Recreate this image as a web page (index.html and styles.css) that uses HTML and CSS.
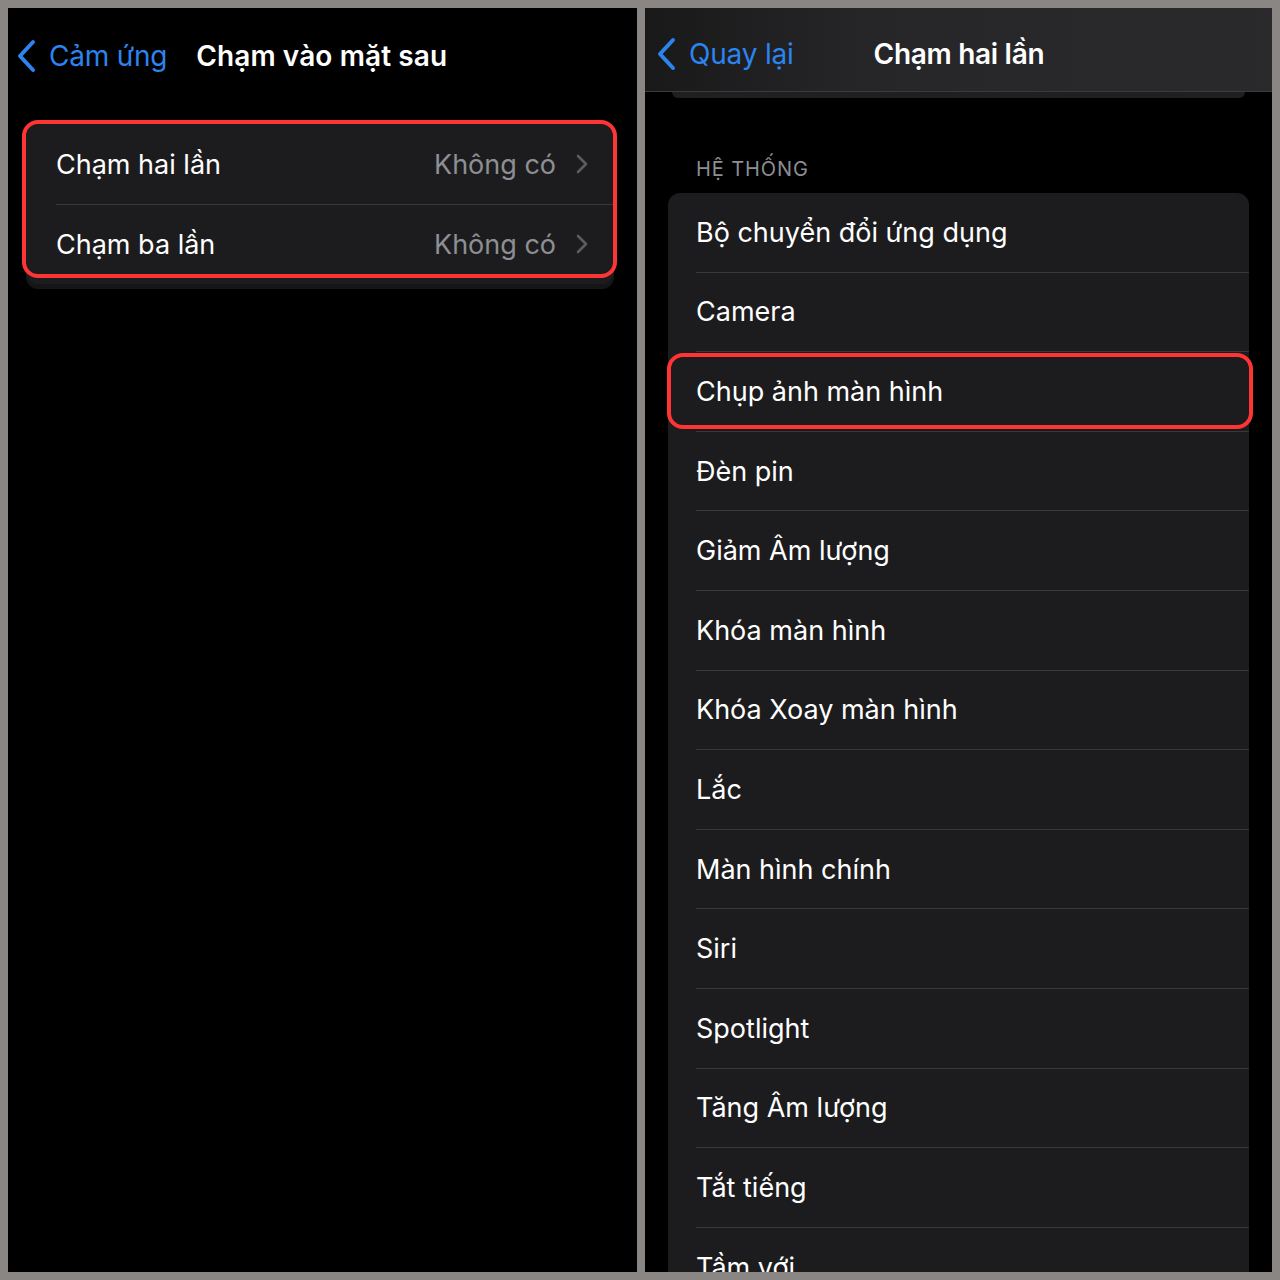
FILE: index.html
```html
<!DOCTYPE html>
<html lang="vi">
<head>
    <meta charset="UTF-8">
    <meta name="viewport" content="width=device-width, initial-scale=1.0">
    <title>Chạm vào mặt sau</title>
    <link rel="stylesheet" href="styles.css">
</head>
<body>
<div class="screen screen-left">
    <div class="nav">
        <a class="back-button" href="#">
            <svg class="back-icon" width="22" height="34" viewBox="0 0 22 34"><path d="M18 3 L5 17 L18 31" fill="none" stroke="currentColor" stroke-width="4" stroke-linecap="round" stroke-linejoin="round"/></svg>
            <span>Cảm ứng</span>
        </a>
        <h1 class="nav-title">Chạm vào mặt sau</h1>
    </div>
    <div class="group group-short">
        <div class="row">
            <span class="row-label">Chạm hai lần</span>
            <span class="row-value">Không có</span>
            <svg class="chevron" width="12" height="20" viewBox="0 0 12 20"><path d="M2 2 L10 10 L2 18" fill="none" stroke="currentColor" stroke-width="2.6" stroke-linecap="round" stroke-linejoin="round"/></svg>
        </div>
        <div class="row">
            <span class="row-label">Chạm ba lần</span>
            <span class="row-value">Không có</span>
            <svg class="chevron" width="12" height="20" viewBox="0 0 12 20"><path d="M2 2 L10 10 L2 18" fill="none" stroke="currentColor" stroke-width="2.6" stroke-linecap="round" stroke-linejoin="round"/></svg>
        </div>
        <div class="highlight highlight-group"></div>
    </div>
</div>

<div class="screen screen-right">
    <div class="nav nav-bar">
        <a class="back-button" href="#">
            <svg class="back-icon" width="22" height="34" viewBox="0 0 22 34"><path d="M18 3 L5 17 L18 31" fill="none" stroke="currentColor" stroke-width="4" stroke-linecap="round" stroke-linejoin="round"/></svg>
            <span>Quay lại</span>
        </a>
        <h1 class="nav-title">Chạm hai lần</h1>
        <div class="under-card"></div>
    </div>
    <p class="section-title">HỆ THỐNG</p>
    <div class="group group-list">
        <div class="item">Bộ chuyển đổi ứng dụng</div>
        <div class="item">Camera</div>
        <div class="item item-selected">Chụp ảnh màn hình<span class="highlight highlight-item"></span></div>
        <div class="item">Đèn pin</div>
        <div class="item">Giảm Âm lượng</div>
        <div class="item">Khóa màn hình</div>
        <div class="item">Khóa Xoay màn hình</div>
        <div class="item">Lắc</div>
        <div class="item">Màn hình chính</div>
        <div class="item">Siri</div>
        <div class="item">Spotlight</div>
        <div class="item">Tăng Âm lượng</div>
        <div class="item">Tắt tiếng</div>
        <div class="item">Tầm với</div>
    </div>
</div>
</body>
</html>
```

FILE: styles.css
```css
* {
    box-sizing: border-box;
}

body {
    background-color: #8a8683;
    color: #FFFFFF;
    font-family: Inter, "Noto Sans", sans-serif;
    margin: 0;
    padding: 8px;
    height: 1280px;
    display: flex;
    gap: 8px;
}

.screen {
    background-color: #000000;
    height: 1264px;
    overflow: hidden;
    position: relative;
}

.screen-left {
    width: 629px;
}

.screen-right {
    width: 627px;
}

/* navigation */

.nav {
    display: flex;
    align-items: center;
    height: 96px;
    padding-left: 7px;
}

.nav-bar {
    height: 84px;
    padding-left: 10px;
    padding-top: 8px;
    position: relative;
    background: linear-gradient(90deg, #19191a 0%, #262628 35%, #2a2a2c 100%);
    border-bottom: 1px solid #3b3b3d;
}

.back-button {
    display: flex;
    align-items: center;
    gap: 12px;
    color: #2c84ee;
    text-decoration: none;
    font-size: 28px;
    letter-spacing: -0.2px;
}

.back-icon {
    display: block;
}

.screen-left .nav-title {
    margin: 0 0 0 29px;
    letter-spacing: 0.1px;
}

.screen-right .nav-title {
    margin: 0 0 0 80px;
}

.nav-title {
    font-size: 28px;
    font-weight: 600;
    letter-spacing: -0.3px;
}

.under-card {
    position: absolute;
    left: 27px;
    right: 27px;
    bottom: -7px;
    height: 6px;
    background-color: #1f1f21;
    border-radius: 0 0 12px 12px;
}

/* groups */

.group {
    background-color: #1c1c1e;
    border-radius: 12px;
    position: relative;
}

.group-short {
    margin: 20px 23px 0 18px;
    box-shadow: 0 5px 0 #151517;
}

.row {
    display: flex;
    align-items: center;
    height: 80px;
    padding: 0 26px 0 30px;
    font-size: 27px;
    position: relative;
}

.row + .row::before {
    content: "";
    position: absolute;
    top: 0;
    left: 30px;
    right: 0;
    border-top: 1px solid #38383a;
}

.row-label {
    flex: 1;
}

.row-value {
    color: #8e8e93;
    margin-right: 20px;
}

.chevron {
    color: #5b5b60;
}

.section-title {
    margin: 65px 0 0 51px;
    color: #8e8e93;
    font-size: 20px;
    letter-spacing: 0.9px;
}

.group-list {
    margin: 12px 23px 0 23px;
}

.item {
    height: 79.6px;
    display: flex;
    align-items: center;
    margin-left: 28px;
    font-size: 27px;
    border-bottom: 1px solid #38383a;
    position: relative;
}

/* red markers */

.highlight {
    position: absolute;
    border: 4px solid #ff3535;
    border-radius: 16px;
    pointer-events: none;
}

.highlight-group {
    top: -4px;
    left: -4px;
    right: -3px;
    bottom: 6px;
}

.highlight-item {
    top: 1px;
    left: -29px;
    right: -4px;
    bottom: 2px;
}
```
